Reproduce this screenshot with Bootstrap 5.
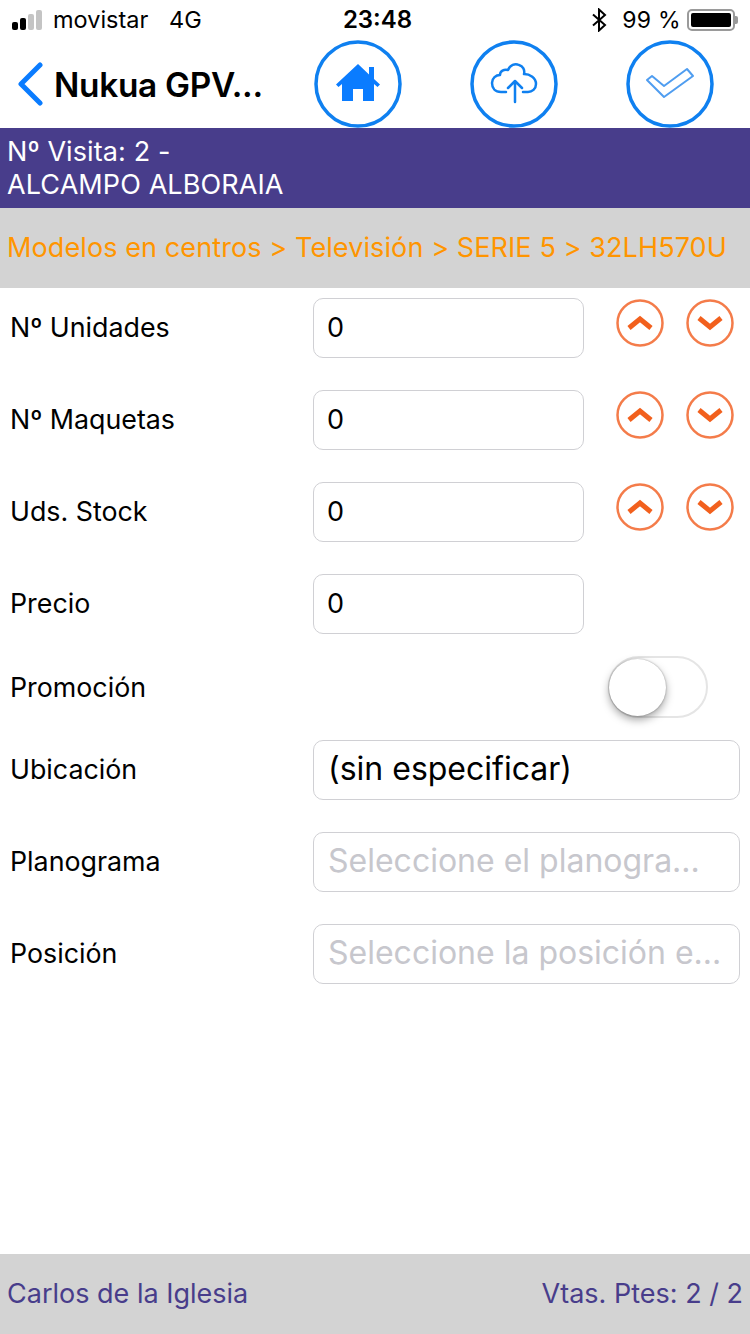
<!DOCTYPE html>
<html lang="es">
<head>
    <meta charset="UTF-8">
    <meta name="viewport" content="width=device-width, initial-scale=1.0">
    <title>Nukua GPV</title>
    <link href="https://cdn.jsdelivr.net/npm/bootstrap@5.3.0/dist/css/bootstrap.min.css" rel="stylesheet">
    <style>
        html, body { height: 1334px; overflow: hidden; }
        body { font-family: Inter, "Liberation Sans", sans-serif; color: #000; background: #fff; width: 750px; }
        .status-bar { height: 40px; font-size: 23.5px; padding: 0 12px; }
        .signal { gap: 2px; width: 36px; }
        .signal i { display: block; width: 6px; background: #c4c4c4; border-radius: 2px; }
        .signal i.on { background: #000; }
        .carrier { margin-left: 5px; width: 116px; }
        .clock { position: absolute; left: 0; right: 0; padding-left: 5px; text-align: center; font-weight: 600; font-size: 24px; }
        .pct { margin-left: 15px; margin-right: 6px; font-size: 23px; letter-spacing: .3px; }
        .batt { width: 48px; height: 22px; border: 2px solid #9a9a9a; border-radius: 5px; padding: 2px; }
        .batt span { display: block; height: 100%; background: #000; border-radius: 2px; }
        .batt-tip { width: 3px; height: 8px; background: #9a9a9a; border-radius: 0 2px 2px 0; }
        .top-nav { height: 88px; padding-left: 17px; }
        .app-title { font-size: 33.4px; font-weight: 600; width: 260px; margin-left: 11px; padding-top: 3px; letter-spacing: -.3px; }
        .round-btn { width: 88px; height: 88px; position: absolute; top: 40px; }
        .visit-bar { height: 80px; background: #483d8b; color: #fff; font-size: 27px; line-height: 33px; letter-spacing: .1px; padding: 7px 7px 0; }
        .crumb-bar { height: 80px; background: #d3d3d3; color: #ff9500; font-size: 27px; letter-spacing: .1px; padding-left: 7px; white-space: nowrap; }
        .form-area { padding: 10px 10px 0 10px; }
        .field-row { height: 60px; margin-bottom: 32px; }
        .field-row.low { height: 42px; }
        .field-label { width: 303px; font-size: 26.800px; padding-bottom: 2px; flex: none; }
        .field-row.low .field-label { padding-bottom: 0; }
        .form-control.gpv { height: 60px; border-radius: 10px; border-color: #d0d0d4; font-size: 27px; padding: 0 13px 2px; color: #000; }
        .form-control.gpv::placeholder { color: #c7c7cd; opacity: 1; }
        .form-control.short { width: 271px; flex: none; }
        .form-control.wide { width: 427px; flex: none; font-size: 32px; padding: 0 13px 4px 14px; }
        .form-control.wide::placeholder { font-size: 32px; }
        .spin { width: 48px; height: 48px; margin-top: 1px; flex: none; }
        .spin-up { margin-left: 32px; }
        .spin-down { margin-left: 22px; }
        .ios-toggle { width: 100px; height: 62px; margin-left: 295px; border: 2px solid #e5e5e5; border-radius: 31px; position: relative; background: #fff; }
        .ios-toggle span { position: absolute; left: -1px; top: 1px; width: 57px; height: 57px; border-radius: 50%; background: #fff; box-shadow: 0 4px 9px rgba(0,0,0,.35), 0 0 2px rgba(0,0,0,.35); }
        .foot-bar { position: absolute; left: 0; right: 0; top: 1254px; height: 80px; background: #d3d3d3; color: #483d8b; font-size: 27px; padding: 0 7px; }
    </style>
</head>
<body class="position-relative">
    <div class="status-bar d-flex align-items-center position-relative">
        <div class="signal d-flex align-items-end">
            <i class="on" style="height:8px"></i><i class="on" style="height:12px"></i><i style="height:16px"></i><i style="height:20px"></i>
        </div>
        <div class="carrier">movistar</div>
        <div>4G</div>
        <div class="clock">23:48</div>
        <div class="ms-auto d-flex align-items-center position-relative">
            <svg width="16" height="24" viewBox="0 0 16 24" fill="none" stroke="#000" stroke-width="2"><path d="M2 6.500 14 17 8 22.500V1.500L14 7 2 17.500"/></svg>
            <span class="pct">99 %</span>
            <div class="batt"><span></span></div>
            <div class="batt-tip"></div>
        </div>
    </div>

    <div class="top-nav d-flex align-items-center">
        <svg width="26" height="44" viewBox="0 0 26 44" fill="none" stroke="#0a7cff" stroke-width="5" stroke-linecap="round" stroke-linejoin="round"><path d="M23 3 4 22 23 41"/></svg>
        <div class="app-title">Nukua GPV...</div>
    </div>
    <svg class="round-btn" style="left:314px" viewBox="0 0 88 88">
        <circle cx="44" cy="44" r="42" fill="#fff" stroke="#0f80f0" stroke-width="3.500"/>
        <path fill="#0a7cff" d="M44 24 22 44.500 24.500 47 28 44V61H39V49H49V61H60V44L63.500 47 66 44.500 60 39V27H55V34.500Z"/>
    </svg>
    <svg class="round-btn" style="left:470px" viewBox="0 0 88 88" fill="none" stroke="#0f80f0">
        <circle cx="44" cy="44" r="42" fill="#fff" stroke-width="3.500"/>
        <path stroke-width="2.500" stroke-linecap="round" stroke-linejoin="round" d="M36 52H31C25 52 22 48 22 43 22 38 26 35 30 35 30 31 34 29 38 30 40 25 45 23 49 25 53 26 55 30 54 34 60 34 66 38 66 44 66 49 62 52 58 52H53"/>
        <path stroke-width="2.500" stroke-linecap="round" stroke-linejoin="round" d="M45 62V41M38 48 45 41 52 48"/>
    </svg>
    <svg class="round-btn" style="left:626px" viewBox="0 0 88 88" fill="none" stroke="#0f80f0">
        <circle cx="44" cy="44" r="42" fill="#fff" stroke-width="3.500"/>
        <path stroke="#4f9df0" stroke-width="2" stroke-linejoin="round" d="M21 40 26 36 38 46 61 29 67 36 38 57Z"/>
    </svg>

    <div class="visit-bar">Nº Visita: 2 -<br>ALCAMPO ALBORAIA</div>
    <div class="crumb-bar d-flex align-items-center">Modelos en centros &gt; Televisión &gt; SERIE 5 &gt; 32LH570U</div>

    <form class="form-area">
        <div class="field-row d-flex align-items-center">
            <div class="field-label">Nº Unidades</div>
            <input class="form-control gpv short" value="0">
            <svg class="spin spin-up align-self-start" viewBox="0 0 48 48" fill="none" stroke="#f47c4a"><circle cx="24" cy="24" r="22.500" stroke-width="2.500"/><path stroke="#f2601d" stroke-width="5" d="M13 29 24 20 35 29"/></svg>
            <svg class="spin spin-down align-self-start" viewBox="0 0 48 48" fill="none" stroke="#f47c4a"><circle cx="24" cy="24" r="22.500" stroke-width="2.500"/><path stroke="#f2601d" stroke-width="5" d="M13 19 24 28 35 19"/></svg>
        </div>
        <div class="field-row d-flex align-items-center">
            <div class="field-label">Nº Maquetas</div>
            <input class="form-control gpv short" value="0">
            <svg class="spin spin-up align-self-start" viewBox="0 0 48 48" fill="none" stroke="#f47c4a"><circle cx="24" cy="24" r="22.500" stroke-width="2.500"/><path stroke="#f2601d" stroke-width="5" d="M13 29 24 20 35 29"/></svg>
            <svg class="spin spin-down align-self-start" viewBox="0 0 48 48" fill="none" stroke="#f47c4a"><circle cx="24" cy="24" r="22.500" stroke-width="2.500"/><path stroke="#f2601d" stroke-width="5" d="M13 19 24 28 35 19"/></svg>
        </div>
        <div class="field-row d-flex align-items-center">
            <div class="field-label">Uds. Stock</div>
            <input class="form-control gpv short" value="0">
            <svg class="spin spin-up align-self-start" viewBox="0 0 48 48" fill="none" stroke="#f47c4a"><circle cx="24" cy="24" r="22.500" stroke-width="2.500"/><path stroke="#f2601d" stroke-width="5" d="M13 29 24 20 35 29"/></svg>
            <svg class="spin spin-down align-self-start" viewBox="0 0 48 48" fill="none" stroke="#f47c4a"><circle cx="24" cy="24" r="22.500" stroke-width="2.500"/><path stroke="#f2601d" stroke-width="5" d="M13 19 24 28 35 19"/></svg>
        </div>
        <div class="field-row d-flex align-items-center">
            <div class="field-label">Precio</div>
            <input class="form-control gpv short" value="0">
        </div>
        <div class="field-row low d-flex align-items-center">
            <div class="field-label">Promoción</div>
            <div class="ios-toggle"><span></span></div>
        </div>
        <div class="field-row d-flex align-items-center">
            <div class="field-label">Ubicación</div>
            <input class="form-control gpv wide" value="(sin especificar)">
        </div>
        <div class="field-row d-flex align-items-center">
            <div class="field-label">Planograma</div>
            <input class="form-control gpv wide" placeholder="Seleccione el planogra...">
        </div>
        <div class="field-row d-flex align-items-center">
            <div class="field-label">Posición</div>
            <input class="form-control gpv wide" placeholder="Seleccione la posición e...">
        </div>
    </form>

    <div class="foot-bar d-flex align-items-center justify-content-between">
        <div>Carlos de la Iglesia</div>
        <div>Vtas. Ptes: 2 / 2</div>
    </div>
</body>
</html>
